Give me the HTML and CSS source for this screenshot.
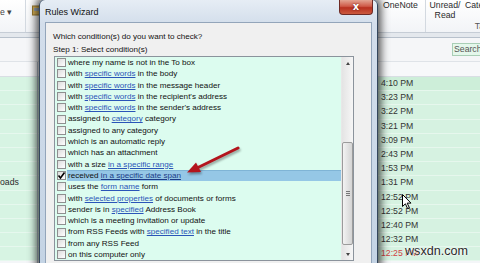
FILE: index.html
```html
<!DOCTYPE html>
<html lang="en">
<head>
  <meta charset="UTF-8">
  <title>Rules Wizard</title>
  <link rel="stylesheet" href="styles.css">
</head>
<body>
<div class="desktop">

  <!-- Outlook behind the dialog -->
  <div class="app">
    <div class="ribbon">
      <div class="rb-group rb-first"><span class="rb-drop">e ▾</span></div>
      <div class="rb-group rb-main">
        <svg class="rb-icon" width="9" height="13" viewBox="0 0 9 13">
          <rect x="0.5" y="2" width="7" height="9" fill="#d9b45a" stroke="#9c7a2e"/>
          <rect x="2" y="4" width="6" height="3" fill="#9aa7b5"/>
        </svg>
        <div class="rb-btn">OneNote</div>
      </div>
      <div class="rb-group rb-tags">
        <div class="rb-row">
          <div class="rb-btn rb-unread">Unread/<br>Read</div>
          <div class="rb-btn">Cate</div>
        </div>
        <div class="rb-label">Tags</div>
      </div>
    </div>
    <div class="ribbon-foot"></div>
    <div class="toolbar">
      <div class="search">Search</div>
    </div>
    <div class="panes">
      <div class="folder-pane">
        <div class="pane-head"></div>
        <div class="frow"></div>
        <div class="frow"></div>
        <div class="frow"></div>
        <div class="frow"></div>
        <div class="frow"></div>
        <div class="frow"></div>
        <div class="frow"></div>
        <div class="frow">oads</div>
        <div class="frow"></div>
        <div class="frow"></div>
        <div class="frow"></div>
        <div class="frow"></div>
        <div class="frow"></div>
      </div>
      <div class="mail-list">
        <div class="pane-head"></div>
        <div class="mrow first"><span class="subject"></span><span class="time">4:10 PM</span></div>
        <div class="mrow"><span class="subject"></span><span class="time">3:23 PM</span></div>
        <div class="mrow"><span class="subject"></span><span class="time">3:22 PM</span></div>
        <div class="mrow"><span class="subject"></span><span class="time">3:21 PM</span></div>
        <div class="mrow"><span class="subject"></span><span class="time">3:09 PM</span></div>
        <div class="mrow"><span class="subject"></span><span class="time">2:43 PM</span></div>
        <div class="mrow"><span class="subject"></span><span class="time">1:53 PM</span></div>
        <div class="mrow"><span class="subject"></span><span class="time">1:31 PM</span></div>
        <div class="mrow"><span class="subject"></span><span class="time">12:52 PM</span></div>
        <div class="mrow"><span class="subject"></span><span class="time">12:52 PM</span></div>
        <div class="mrow"><span class="subject"></span><span class="time">12:40 PM</span></div>
        <div class="mrow"><span class="subject"></span><span class="time">12:32 PM</span></div>
        <div class="mrow"><span class="subject"></span><span class="time late">12:25 PM</span></div>
      </div>
    </div>
  </div>

  <!-- Rules Wizard window -->
  <div class="dialog">
    <div class="titlebar">
      <span class="title">Rules Wizard</span>
      <span class="close">x</span>
    </div>
    <div class="client">
      <p class="prompt">Which condition(s) do you want to check?</p>
      <p class="prompt">Step 1: Select condition(s)</p>
      <div class="listbox">
        <ul class="conditions">
          <li><span class="cb"></span><span class="label">where my name is not in the To box</span></li>
          <li><span class="cb"></span><span class="label">with <span class="link">specific words</span> in the body</span></li>
          <li><span class="cb"></span><span class="label">with <span class="link">specific words</span> in the message header</span></li>
          <li><span class="cb"></span><span class="label">with <span class="link">specific words</span> in the recipient's address</span></li>
          <li><span class="cb"></span><span class="label">with <span class="link">specific words</span> in the sender's address</span></li>
          <li><span class="cb"></span><span class="label">assigned to <span class="link">category</span> category</span></li>
          <li><span class="cb"></span><span class="label">assigned to any category</span></li>
          <li><span class="cb"></span><span class="label">which is an automatic reply</span></li>
          <li><span class="cb"></span><span class="label">which has an attachment</span></li>
          <li><span class="cb"></span><span class="label">with a size <span class="link">in a specific range</span></span></li>
          <li class="selected"><span class="cb checked"><svg width="9" height="9" viewBox="0 0 9 9"><path d="M1.5 4.5 L3.5 7 L7.5 1.5" fill="none" stroke="#000" stroke-width="1.6"/></svg></span><span class="label">received <span class="link">in a specific date span</span></span></li>
          <li><span class="cb"></span><span class="label">uses the <span class="link">form name</span> form</span></li>
          <li><span class="cb"></span><span class="label">with <span class="link">selected properties</span> of documents or forms</span></li>
          <li><span class="cb"></span><span class="label">sender is in <span class="link">specified</span> Address Book</span></li>
          <li><span class="cb"></span><span class="label">which is a meeting invitation or update</span></li>
          <li><span class="cb"></span><span class="label">from RSS Feeds with <span class="link">specified text</span> in the title</span></li>
          <li><span class="cb"></span><span class="label">from any RSS Feed</span></li>
          <li><span class="cb"></span><span class="label">on this computer only</span></li>
        </ul>
        <div class="scrollbar">
          <div class="sb-btn"><span class="tri-up"></span></div>
          <div class="sb-track">
            <div class="sb-thumb"><span class="grip"></span></div>
          </div>
          <div class="sb-btn"><span class="tri-down"></span></div>
        </div>
      </div>
    </div>
  </div>

  <!-- annotation arrow -->
  <svg class="arrow" width="64" height="40" viewBox="0 0 64 40">
    <line x1="58" y1="8" x2="18" y2="27.5" stroke="#b3151d" stroke-width="3" stroke-linecap="round"/>
    <polygon points="7,32.5 21,32 16,22.5" fill="#b3151d"/>
  </svg>

  <svg class="cursor" width="11" height="16" viewBox="0 0 11 16">
    <path d="M0.5 0.5 L0.5 12.5 L3.4 9.8 L5.6 14.6 L7.4 13.8 L5.2 9.1 L9 9.1 Z" fill="#fff" stroke="#000" stroke-width="1"/>
  </svg>

  <div class="watermark">wsxdn.com</div>
</div>
</body>
</html>
```

FILE: styles.css
```css
* {
  box-sizing: border-box;
  margin: 0;
  padding: 0;
}

html, body {
  width: 480px;
  height: 263px;
  overflow: hidden;
}

body {
  font-family: "Liberation Sans", Arial, sans-serif;
  color: #1e1e1e;
  background: #f4f6f8;
}

.desktop {
  position: relative;
  width: 480px;
  height: 263px;
  overflow: hidden;
}

/* ---------- Outlook ---------- */

.app {
  display: flex;
  flex-direction: column;
  height: 100%;
  font-size: 8.7px;
  color: #2b2b2b;
}

.ribbon {
  display: flex;
  height: 33px;
  overflow: hidden;
  background: linear-gradient(#ffffff, #f2f4f7);
  border-bottom: 1px solid #c6cdd6;
}

.rb-group {
  flex: none;
  border-right: 1px solid #d3d9e0;
}

.rb-first {
  width: 26px;
  padding-top: 7px;
}

.rb-drop {
  color: #444;
}

.rb-main {
  width: 400px;
  display: flex;
  justify-content: space-between;
  align-items: flex-start;
}

.rb-icon {
  margin: 4px 0 0 6px;
}

.rb-btn {
  line-height: 9.5px;
  padding-top: 1px;
}

.rb-main .rb-btn {
  width: 44px;
  padding-left: 2px;
}

.rb-tags {
  width: 116px;
  display: flex;
  flex-direction: column;
  border-right: none;
}

.rb-row {
  display: flex;
  flex: 1;
}

.rb-unread {
  width: 38px;
  text-align: center;
}

.rb-tags .rb-btn + .rb-btn {
  padding-left: 1px;
}

.rb-label {
  height: 11px;
  line-height: 10px;
  text-align: center;
  color: #555;
}

.ribbon-foot {
  height: 5px;
  background: #e4e8ed;
  border-bottom: 1px solid #b8c1cc;
}

.toolbar {
  height: 24px;
  display: flex;
  justify-content: flex-end;
  align-items: center;
  background: #f5f6f8;
  border-bottom: 1px solid #dfe3e8;
}

.search {
  width: 44px;
  height: 13px;
  margin-right: -16px;
  padding-left: 1px;
  line-height: 11px;
  border: 1px solid #a9ceb6;
  background: #e4f7eb;
  color: #555;
}

.panes {
  flex: 1;
  display: flex;
}

.pane-head {
  height: 15px;
  background: #f7f8fa;
  border-bottom: 1px solid #d9dee4;
}

.folder-pane {
  width: 38px;
  border-right: 1px solid #b9c4cf;
}

.frow {
  height: 14.2px;
  line-height: 13px;
  background: #d7f4e3;
  border-bottom: 1px solid #e6f8ee;
}

.mail-list {
  flex: 1;
}

.mrow {
  display: flex;
  height: 14.2px;
  line-height: 13.5px;
  background: #d6f2e1;
  border-bottom: 1px solid #e6f7ed;
}

.mrow.first {
  background: #cdeed9;
}

.subject {
  flex: 1;
}

.time {
  width: 99px;
  color: #333;
}

.time.late {
  color: #d04343;
}

/* ---------- Dialog window ---------- */

.dialog {
  position: absolute;
  left: 39px;
  top: -1px;
  width: 339px;
  height: 280px;
  padding: 0 5px;
  display: flex;
  flex-direction: column;
  border: 1px solid #34465c;
  border-radius: 6px 6px 0 0;
  background: linear-gradient(#e6edf5, #d3deeb 24px, #c3d3e4);
  box-shadow: 0 0 9px 3px rgba(0, 0, 0, 0.68);
}

.titlebar {
  height: 22px;
  display: flex;
  align-items: flex-start;
}

.title {
  padding-top: 7px;
  font-size: 9px;
  color: #111;
}

.close {
  margin-left: auto;
  margin-right: -1px;
  width: 34px;
  height: 15px;
  border: 1px solid #6e2a24;
  border-top: none;
  border-radius: 0 0 4px 4px;
  background: linear-gradient(#e3a492, #cf5a48 45%, #b8301f 55%, #cb5a3f);
  color: #fff;
  font: bold 10px/13px "DejaVu Sans", sans-serif;
  text-align: center;
  text-shadow: 0 0 2px #5a1208;
}

.client {
  flex: 1;
  padding: 7px 0 0 7px;
  background: #f0f0f0;
  border: 1px solid #93a5ba;
  font-size: 8.1px;
  color: #111;
}

.prompt {
  line-height: 13px;
}

.listbox {
  display: flex;
  width: 300px;
  height: 205px;
  margin-left: 1px;
  border: 1px solid #8b939c;
  background: #dcfcef;
  overflow: hidden;
}

.conditions {
  flex: 1;
  list-style: none;
}

.conditions li {
  display: flex;
  align-items: center;
  height: 11.3px;
}

.cb {
  width: 9px;
  height: 9px;
  margin-left: 2px;
  flex: none;
  border: 1px solid #8e8f8f;
  background: linear-gradient(135deg, #dcdcdc, #ffffff);
}

.cb svg {
  display: block;
  margin: -1px 0 0 -1px;
}

.label {
  flex: 1;
  margin-left: 1px;
  padding-left: 1px;
  line-height: 11.3px;
  white-space: nowrap;
}

.link {
  color: #2a55b8;
  text-decoration: underline;
}

.selected .label {
  background: #95c7e6;
  border-top: 1px solid #7fb4d6;
  line-height: 10.3px;
}

.selected .link {
  color: #1b3c86;
}

.scrollbar {
  width: 12px;
  display: flex;
  flex-direction: column;
  background: linear-gradient(to right, #e4e4e4, #f6f6f6);
  border-left: 1px solid #e8e8e8;
}

.sb-btn {
  height: 12px;
  display: flex;
  align-items: center;
  justify-content: center;
}

.tri-up,
.tri-down {
  width: 0;
  height: 0;
  border-left: 2.5px solid transparent;
  border-right: 2.5px solid transparent;
}

.tri-up {
  border-bottom: 3px solid #444;
}

.tri-down {
  border-top: 3px solid #444;
}

.sb-track {
  flex: 1;
}

.sb-thumb {
  height: 103px;
  margin: 73px 0 0 0;
  display: flex;
  align-items: center;
  justify-content: center;
  border: 1px solid #9b9b9b;
  border-radius: 2px;
  background: linear-gradient(to right, #f3f3f3, #e0e0e0 60%, #d4d4d4);
}

.grip {
  width: 4px;
  height: 5px;
  border-top: 1px solid #777;
  border-bottom: 1px solid #777;
  background: linear-gradient(#777, #777) center / 4px 1px no-repeat;
}

/* ---------- overlays ---------- */

.arrow {
  position: absolute;
  left: 180px;
  top: 140px;
  filter: drop-shadow(1px 2px 1px rgba(0, 0, 0, 0.35));
}

.cursor {
  position: absolute;
  left: 402px;
  top: 194px;
}

.watermark {
  position: absolute;
  left: 405px;
  top: 244px;
  font: 12.6px "Liberation Sans", Arial, sans-serif;
  color: #2a2a2a;
  text-shadow: 0 0 2px #fff, 0 0 2px #fff;
}
```
